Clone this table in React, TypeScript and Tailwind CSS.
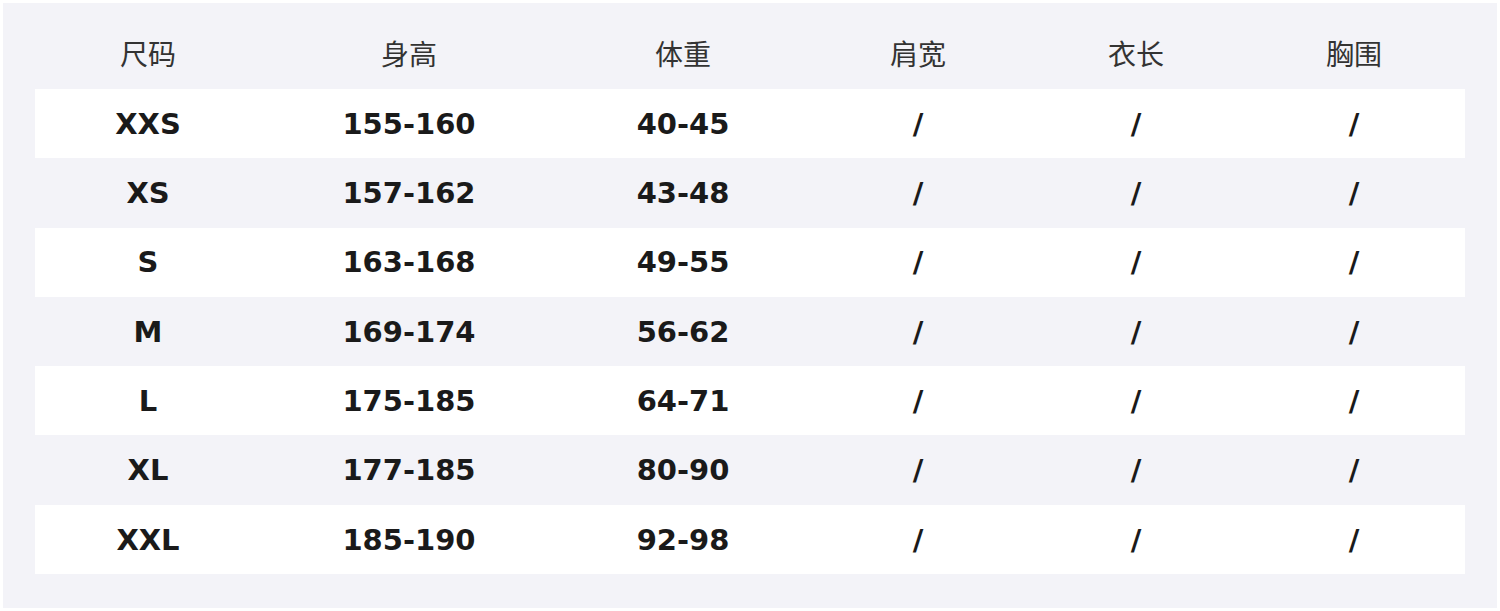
const headers = ['尺码', '身高', '体重', '肩宽', '衣长', '胸围'];

const rows = [
  ['XXS', '155-160', '40-45', '/', '/', '/'],
  ['XS', '157-162', '43-48', '/', '/', '/'],
  ['S', '163-168', '49-55', '/', '/', '/'],
  ['M', '169-174', '56-62', '/', '/', '/'],
  ['L', '175-185', '64-71', '/', '/', '/'],
  ['XL', '177-185', '80-90', '/', '/', '/'],
  ['XXL', '185-190', '92-98', '/', '/', '/'],
];

const cols = 'grid grid-cols-[226px_296px_252px_218px_218px_218px]';

export default function App() {
  return (
    <div className="w-[1500px] h-[611px] bg-white p-[3px]">
      <div className="h-[605px] bg-[#f3f3f8] px-[32px]">
        {/* Header */}
        <div className={`${cols} h-[86px] items-center pt-[14px] text-[28px] text-[#333333] font-['Noto_Sans_CJK_SC',sans-serif]`}>
          {headers.map((h) => (
            <div key={h} className="text-center">{h}</div>
          ))}
        </div>

        {/* Rows */}
        {rows.map((r, i) => (
          <div key={r[0]}
            className={`${cols} h-[69.3px] items-center pt-[2px] text-[29px] font-bold text-[#1a1a1a] font-['DejaVu_Sans',sans-serif] ${i % 2 === 0 ? 'bg-white' : ''}`}>
            {r.map((c, j) => (
              <div key={j} className="text-center">{c}</div>
            ))}
          </div>
        ))}
      </div>
    </div>
  );
}
